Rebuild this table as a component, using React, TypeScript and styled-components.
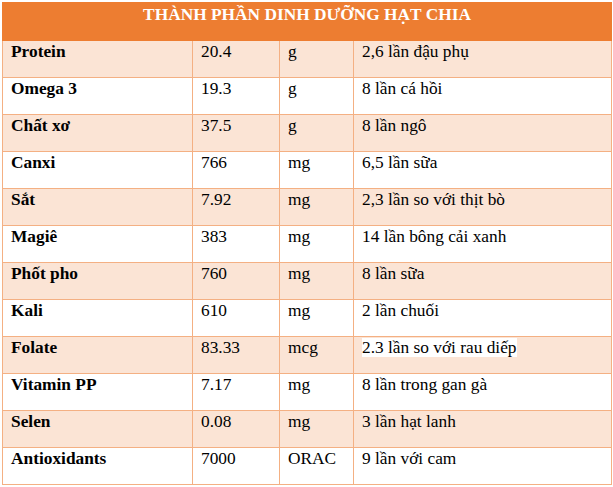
import styled, { createGlobalStyle } from "styled-components"

const GlobalStyle = createGlobalStyle`
  html, body {
    margin: 0;
    padding: 0;
    background: #ffffff;
  }
  body, table, th, td {
    font-family: "Liberation Serif", "Times New Roman", serif;
  }
`

const Page = styled.div`
  padding: 2px;
`

const Table = styled.table`
  width: 609px;
  border-collapse: collapse;
  table-layout: fixed;
  font-family: "Liberation Serif", "Times New Roman", serif;
  font-size: 17.33px;
  color: #000000;
`

const HeaderCell = styled.th`
  height: 38px;
  padding: 2px 0 0;
  box-sizing: border-box;
  background: #ed7d31;
  border: 1px solid #ed7d31;
  color: #ffffff;
  font-family: "Liberation Serif", "Times New Roman", serif;
  font-size: 17.33px;
  font-weight: bold;
  text-align: center;
  vertical-align: top;
`

const Row = styled.tr<{ $shaded: boolean }>`
  background: ${(p) => (p.$shaded ? "#fbe4d5" : "#ffffff")};
`

const Cell = styled.td<{ $bold?: boolean }>`
  height: 37px;
  padding: 1px 8px 0;
  box-sizing: border-box;
  border: 1px solid #f4b083;
  vertical-align: top;
  font-family: "Liberation Serif", "Times New Roman", serif;
  font-size: 17.33px;
  font-weight: ${(p) => (p.$bold ? "bold" : "normal")};
  white-space: nowrap;
`

const Highlight = styled.span`
  background: #ffffff;
`

type Item = {
  name: string
  amount: string
  unit: string
  note: string
  highlight?: boolean
}

const items: Item[] = [
  { name: "Protein", amount: "20.4", unit: "g", note: "2,6 lần đậu phụ" },
  { name: "Omega 3", amount: "19.3", unit: "g", note: "8 lần cá hồi" },
  { name: "Chất xơ", amount: "37.5", unit: "g", note: "8 lần ngô" },
  { name: "Canxi", amount: "766", unit: "mg", note: "6,5 lần sữa" },
  { name: "Sắt", amount: "7.92", unit: "mg", note: "2,3 lần so với thịt bò" },
  { name: "Magiê", amount: "383", unit: "mg", note: "14 lần bông cải xanh" },
  { name: "Phốt pho", amount: "760", unit: "mg", note: "8 lần sữa" },
  { name: "Kali", amount: "610", unit: "mg", note: "2 lần chuối" },
  { name: "Folate", amount: "83.33", unit: "mcg", note: "2.3 lần so với rau diếp", highlight: true },
  { name: "Vitamin PP", amount: "7.17", unit: "mg", note: "8 lần trong gan gà" },
  { name: "Selen", amount: "0.08", unit: "mg", note: "3 lần hạt lanh" },
  { name: "Antioxidants", amount: "7000", unit: "ORAC", note: "9 lần với cam" },
]

const App = () => {
  return (
    <Page>
      <GlobalStyle />
      <Table>
        <colgroup>
          <col style={{ width: 190 }} />
          <col style={{ width: 87 }} />
          <col style={{ width: 74 }} />
          <col style={{ width: 258 }} />
        </colgroup>
        <thead>
          <tr>
            <HeaderCell colSpan={4}>THÀNH PHẦN DINH DƯỠNG HẠT CHIA</HeaderCell>
          </tr>
        </thead>
        <tbody>
          {items.map((item, i) => (
            <Row key={item.name} $shaded={i % 2 === 0}>
              <Cell $bold>{item.name}</Cell>
              <Cell>{item.amount}</Cell>
              <Cell>{item.unit}</Cell>
              <Cell>{item.highlight ? <Highlight>{item.note}</Highlight> : item.note}</Cell>
            </Row>
          ))}
        </tbody>
      </Table>
    </Page>
  )
}

export default App
